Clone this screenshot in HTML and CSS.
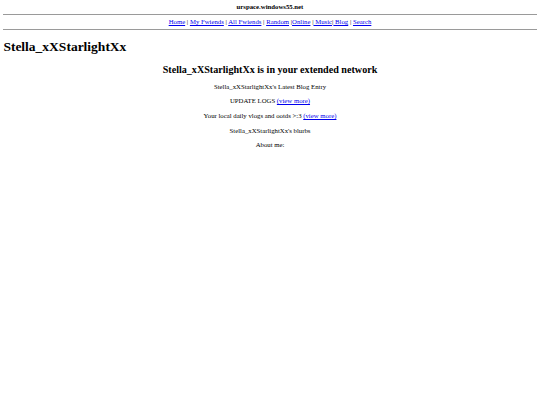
FILE: index.html
```html
<!DOCTYPE html>
<html>
<head>
<meta charset="utf-8">
<title>urspace</title>
<link rel="stylesheet" href="styles.css">
</head>
<body>
<div class="site">urspace.windows55.net</div>
<hr class="rule">
<div class="nav"><a href="#">Home</a> | <a href="#">My Fwiends</a> | <a href="#">All Fwiends</a> | <a href="#">Random</a> |<a href="#">Online</a> |<a href="#"> Music</a>|<a href="#"> Blog</a> | <a href="#">Search</a></div>
<hr class="rule">
<h1 class="name">Stella_xXStarlightXx</h1>
<div class="main">
<h2 class="network">Stella_xXStarlightXx is in your extended network</h2>
<p class="line">Stella_xXStarlightXx's Latest Blog Entry</p>
<p class="line">UPDATE LOGS <a href="#">(view more)</a></p>
<p class="line">Your local daily vlogs and ootds &gt;:3 <a href="#">(view more)</a></p>
<p class="line">Stella_xXStarlightXx's blurbs</p>
<p class="line">About me:</p>
</div>
</body>
</html>
```
FILE: styles.css
```css
html {
  background: #fff;
}
body {
  margin: 3.375px;
  font-family: "Liberation Serif", "Times New Roman", serif;
  font-size: 6.75px;
  color: #000;
}
.site {
  text-align: center;
  font-weight: bold;
}
.rule {
  margin: 3.375px 0;
  border: 0;
  border-top: 1px solid #9a9a9a;
  height: 0;
}
.nav {
  text-align: center;
}
a {
  color: #0000ee;
}
.name {
  font-size: 13.5px;
  margin: 9px 0;
}
.main {
  text-align: center;
}
.network {
  font-size: 10.125px;
  margin: 8.4px 0;
}
.line {
  line-height: 7.6px;
  margin: 7px 0;
}
```
